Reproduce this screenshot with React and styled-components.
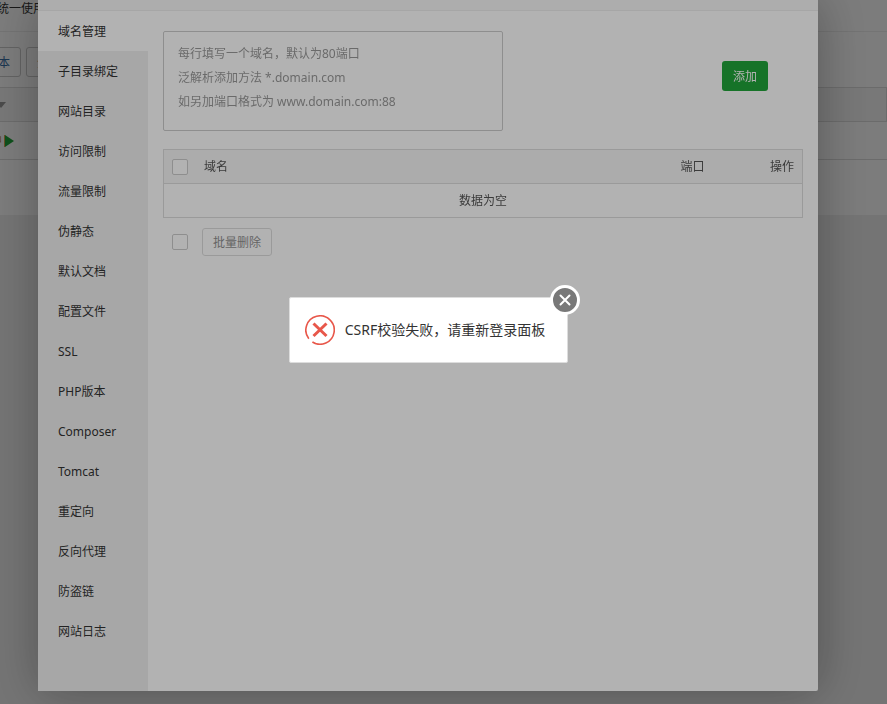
import React, { useState } from "react";
import styled, { createGlobalStyle } from "styled-components";

const menus = [
  "域名管理",
  "子目录绑定",
  "网站目录",
  "访问限制",
  "流量限制",
  "伪静态",
  "默认文档",
  "配置文件",
  "SSL",
  "PHP版本",
  "Composer",
  "Tomcat",
  "重定向",
  "反向代理",
  "防盗链",
  "网站日志",
];

const placeholder = `每行填写一个域名，默认为80端口
泛解析添加方法 *.domain.com
如另加端口格式为 www.domain.com:88`;

const GlobalStyle = createGlobalStyle`
  * {
    box-sizing: border-box;
  }

  body {
    margin: 0;
    background: #f0f0f0;
    color: #333;
    font-family: "Noto Sans", "Noto Sans CJK SC", sans-serif;
    font-size: 12px;
    line-height: 20px;
    overflow: hidden;
  }

  button,
  input,
  textarea {
    margin: 0;
    font: inherit;
  }
`;

const SitePage = () => (
  <Page>
    <Notice>统一使用</Notice>
    <Toolbar>
      <ToolButton type="button">版本</ToolButton>
      <ToolButton type="button">分类</ToolButton>
    </Toolbar>
    <ListHead>
      <svg width="10" height="6" viewBox="0 0 10 6" aria-hidden="true">
        <path d="M0 0h10L5 6z" fill="#999" />
      </svg>
    </ListHead>
    <ListRow>
      <span>中</span>
      <svg width="10" height="12" viewBox="0 0 10 12" aria-hidden="true">
        <path d="M0 0h1v12H0z" fill="#d9a050" />
        <path d="M1 0l9 6-9 6z" fill="#20a53a" />
      </svg>
    </ListRow>
  </Page>
);

const DomainPanel = () => (
  <Panel>
    <AddForm>
      <DomainInput aria-label="域名" placeholder={placeholder} />
      <AddButton type="button">添加</AddButton>
    </AddForm>
    <DomainTable>
      <thead>
        <tr>
          <th className="check">
            <Checkbox type="checkbox" aria-label="全选" />
          </th>
          <th>域名</th>
          <th className="port">端口</th>
          <th className="action">操作</th>
        </tr>
      </thead>
      <tbody>
        <tr>
          <td colSpan="4">数据为空</td>
        </tr>
      </tbody>
    </DomainTable>
    <BatchBar>
      <Checkbox type="checkbox" aria-label="全选" />
      <BatchButton type="button" disabled>
        批量删除
      </BatchButton>
    </BatchBar>
  </Panel>
);

const ErrorMessage = ({ onClose }) => (
  <Message role="alertdialog" aria-label="提示">
    <svg width="30" height="30" viewBox="0 0 30 30" aria-hidden="true">
      <path
        d="M3.800 23.700A14.200 14.200 0 1 1 7.400 27"
        fill="none"
        stroke="#e8574a"
        strokeWidth="1.6"
      />
      <path
        d="M8.500 8.500l13 12.500M21.500 8.500L8.500 21"
        fill="none"
        stroke="#e8574a"
        strokeWidth="3"
      />
    </svg>
    <span>CSRF校验失败，请重新登录面板</span>
    <CloseButton type="button" aria-label="关闭" onClick={onClose}>
      <svg width="12" height="12" viewBox="0 0 12 12" aria-hidden="true">
        <path
          d="M1.500 1.500l9 9M10.500 1.500l-9 9"
          stroke="#fff"
          strokeWidth="2"
          strokeLinecap="round"
        />
      </svg>
    </CloseButton>
  </Message>
);

const App = () => {
  const [active, setActive] = useState("域名管理");
  const [error, setError] = useState(true);
  return (
    <>
      <GlobalStyle />
      <SitePage />
      <ModalLayer>
        <Modal>
          <ModalHead />
          <ModalBody>
            <SideMenu>
              {menus.map((name) => (
                <MenuItem
                  key={name}
                  type="button"
                  $active={name === active}
                  onClick={() => setActive(name)}
                >
                  {name}
                </MenuItem>
              ))}
            </SideMenu>
            <DomainPanel />
          </ModalBody>
        </Modal>
      </ModalLayer>
      {error && (
        <MessageLayer>
          <ErrorMessage onClose={() => setError(false)} />
        </MessageLayer>
      )}
    </>
  );
};

const Page = styled.main`
  height: 215px;
  background: #fff;
  overflow: hidden;
`;

const Notice = styled.div`
  height: 32px;
  margin-left: -3px;
  padding-bottom: 14px;
  display: flex;
  align-items: center;
  border-bottom: 1px solid #eee;
  white-space: nowrap;
`;

const Toolbar = styled.div`
  height: 55px;
  margin-left: -25px;
  padding-top: 15px;
  display: flex;
  gap: 5px;
`;

const ToolButton = styled.button`
  height: 30px;
  padding: 2px 10px 0;
  border: 1px solid #ccc;
  border-radius: 3px;
  background: #fff;
  color: #555;

  &:first-child {
    color: #3a6ea5;
  }
`;

const ListHead = styled.div`
  height: 35px;
  margin-left: -5px;
  display: flex;
  align-items: center;
  border: 1px solid #ddd;
  background: #f6f6f6;
`;

const ListRow = styled.div`
  height: 38px;
  margin-left: -10px;
  display: flex;
  align-items: center;
  gap: 2px;
  border-bottom: 1px solid #ddd;
  color: #c98a2e;
`;

const ModalLayer = styled.div`
  position: fixed;
  inset: 0;
  display: flex;
  padding: 0 69px 13px 38px;
  background: rgba(0, 0, 0, 0.3);
`;

const Modal = styled.section`
  flex: 1;
  display: flex;
  flex-direction: column;
  background: #fff;
  border-radius: 0 0 2px 2px;
  box-shadow: 1px 1px 50px rgba(0, 0, 0, 0.3);
`;

const ModalHead = styled.header`
  height: 11px;
  background: #f8f8f8;
  border-bottom: 1px solid #eee;
`;

const ModalBody = styled.div`
  flex: 1;
  display: flex;
`;

const SideMenu = styled.nav`
  width: 110px;
  display: flex;
  flex-direction: column;
  background: #f0f0f0;
`;

const MenuItem = styled.button`
  height: 40px;
  padding: 2px 0 0 20px;
  border: 0;
  background: ${({ $active }) => ($active ? "#fff" : "transparent")};
  color: #333;
  text-align: left;
  cursor: pointer;
`;

const Panel = styled.div`
  flex: 1;
  padding: 20px 15px;
`;

const AddForm = styled.form`
  display: flex;
  align-items: flex-start;
  justify-content: space-between;
  padding-right: 35px;
  margin-bottom: 18px;
`;

const DomainInput = styled.textarea`
  width: 340px;
  height: 100px;
  padding: 10px 14px;
  border: 1px solid #ccc;
  border-radius: 2px;
  background: #fff;
  line-height: 24px;
  resize: none;
  outline: none;

  &::placeholder {
    color: #999;
    opacity: 1;
  }
`;

const AddButton = styled.button`
  height: 30px;
  margin-top: 30px;
  padding: 2px 11px 0;
  border: 0;
  border-radius: 3px;
  background: #20a53a;
  color: #fff;
  cursor: pointer;
`;

const DomainTable = styled.table`
  width: 100%;
  border: 1px solid #ddd;
  border-collapse: collapse;

  th,
  td {
    height: 34px;
    padding: 0 8px;
    border-bottom: 1px solid #ddd;
    color: #555;
    font-weight: normal;
    text-align: left;
  }

  th {
    background: #f6f6f6;
  }

  td {
    text-align: center;
  }

  .check {
    width: 32px;
  }

  .port {
    width: 60px;
  }

  .action {
    width: 70px;
    text-align: right;
  }
`;

const Checkbox = styled.input`
  width: 16px;
  height: 16px;
  appearance: none;
  display: block;
  border: 1px solid #ccc;
  border-radius: 2px;
  background: #fff;
`;

const BatchBar = styled.div`
  display: flex;
  align-items: center;
  gap: 14px;
  padding: 10px 9px;
`;

const BatchButton = styled.button`
  height: 28px;
  padding: 2px 10px 0;
  border: 1px solid #ccc;
  border-radius: 3px;
  background: #fff;
  color: #555;
  opacity: 0.65;
`;

const MessageLayer = styled.div`
  position: fixed;
  inset: 0;
  display: flex;
  align-items: flex-start;
  justify-content: center;
  padding: 297px 30px 0 0;
  background: rgba(0, 0, 0, 0.3);
`;

const Message = styled.div`
  position: relative;
  height: 66px;
  display: flex;
  align-items: center;
  gap: 10px;
  padding: 0 22px 0 15px;
  border: 1px solid #ddd;
  border-radius: 2px;
  background: #fff;
  font-size: 14px;
  white-space: nowrap;
`;

const CloseButton = styled.button`
  position: absolute;
  top: -13px;
  right: -13px;
  width: 30px;
  height: 30px;
  padding: 0;
  display: flex;
  align-items: center;
  justify-content: center;
  border: 3px solid #fff;
  border-radius: 50%;
  background: #787878;
  cursor: pointer;
`;

export default App;
